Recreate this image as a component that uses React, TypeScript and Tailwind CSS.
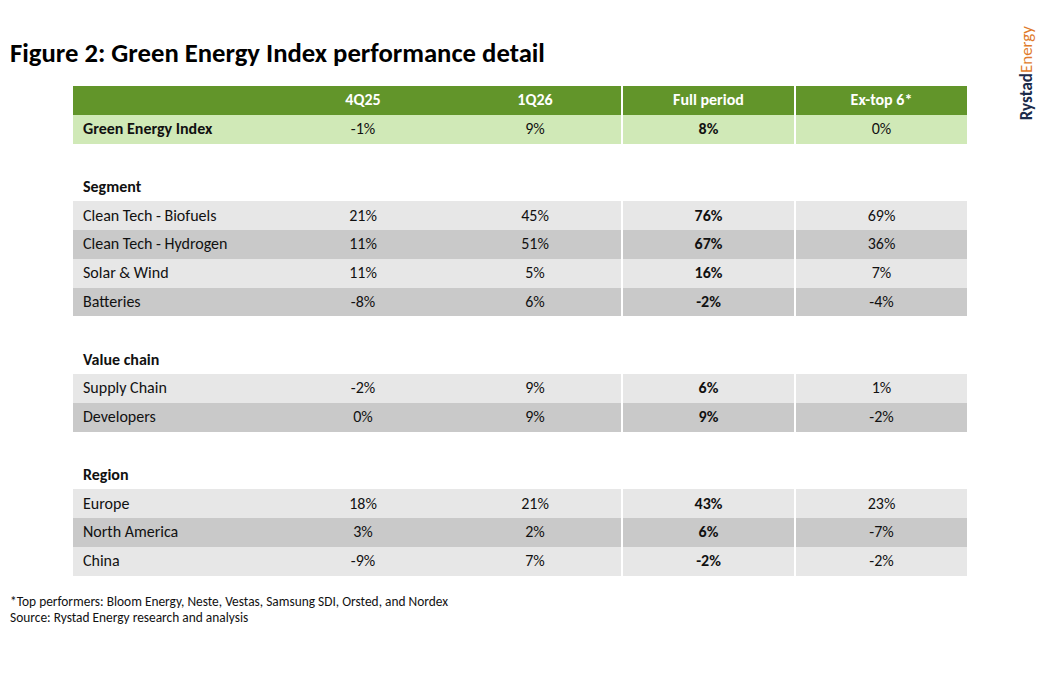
import React from "react";

type Row = { label: string; v: [string, string, string, string] };

const segment: Row[] = [
  { label: "Clean Tech - Biofuels", v: ["21%", "45%", "76%", "69%"] },
  { label: "Clean Tech - Hydrogen", v: ["11%", "51%", "67%", "36%"] },
  { label: "Solar & Wind", v: ["11%", "5%", "16%", "7%"] },
  { label: "Batteries", v: ["-8%", "6%", "-2%", "-4%"] },
];
const valueChain: Row[] = [
  { label: "Supply Chain", v: ["-2%", "9%", "6%", "1%"] },
  { label: "Developers", v: ["0%", "9%", "9%", "-2%"] },
];
const region: Row[] = [
  { label: "Europe", v: ["18%", "21%", "43%", "23%"] },
  { label: "North America", v: ["3%", "2%", "6%", "-7%"] },
  { label: "China", v: ["-9%", "7%", "-2%", "-2%"] },
];

const font = { fontFamily: "Carlito, Lato, 'Open Sans', sans-serif" };

function DataRow({ r, i }: { r: Row; i: number }) {
  const bg = i % 2 === 0 ? "bg-[#e7e7e7]" : "bg-[#c9c9c9]";
  return (
    <div className={`grid grid-cols-[204px_172px_172px_173px_173px] h-[28.8px] items-center text-[16px] text-[#111] ${bg}`}>
      <div className="pl-[10px]">{r.label}</div>
      <div className="text-center">{r.v[0]}</div>
      <div className="text-center">{r.v[1]}</div>
      <div className="text-center font-bold h-full flex items-center justify-center border-l-2 border-white">{r.v[2]}</div>
      <div className="text-center h-full flex items-center justify-center border-l-2 border-white">{r.v[3]}</div>
    </div>
  );
}

function Section({ title, rows }: { title: string; rows: Row[] }) {
  return (
    <>
      <div className="h-[28.8px]" />
      <div className="h-[28.8px] flex items-center pl-[10px] text-[16px] font-bold text-[#111]">{title}</div>
      {rows.map((r, i) => (
        <DataRow key={r.label} r={r} i={i} />
      ))}
    </>
  );
}

export default function App() {
  return (
    <div className="w-[1040px] h-[677px] bg-white overflow-hidden flex" style={font}>
      <div className="flex-1">
        <h1 className="pl-[10px] pt-[37px] text-[26.7px] leading-[32px] font-bold text-black whitespace-nowrap">
          Figure 2: Green Energy Index performance detail
        </h1>

        <div className="ml-[73px] mt-[17px] w-[894px]">
          <div className="grid grid-cols-[204px_172px_172px_173px_173px] h-[28.8px] items-center bg-[#62952a] text-white font-bold text-[16px]">
            <div />
            <div className="text-center">4Q25</div>
            <div className="text-center">1Q26</div>
            <div className="h-full flex items-center justify-center border-l-2 border-white">Full period</div>
            <div className="h-full flex items-center justify-center border-l-2 border-white">Ex-top 6*</div>
          </div>
          <div className="grid grid-cols-[204px_172px_172px_173px_173px] h-[28.8px] items-center bg-[#d0e9b7] text-[16px] text-[#111]">
            <div className="pl-[10px] font-bold">Green Energy Index</div>
            <div className="text-center">-1%</div>
            <div className="text-center">9%</div>
            <div className="h-full flex items-center justify-center border-l-2 border-white font-bold">8%</div>
            <div className="h-full flex items-center justify-center border-l-2 border-white">0%</div>
          </div>
          <Section title="Segment" rows={segment} />
          <Section title="Value chain" rows={valueChain} />
          <Section title="Region" rows={region} />
        </div>

        <div className="pl-[10px] pt-[18px] text-[13.4px] leading-[16px] text-[#111]">
          <div>*Top performers: Bloom Energy, Neste, Vestas, Samsung SDI, Orsted, and Nordex</div>
          <div>Source: Rystad Energy research and analysis</div>
        </div>
      </div>

      <div className="w-[21px] pt-[26px] flex items-start justify-start">
        <div
          className="text-[17px] leading-[15px] whitespace-nowrap"
          style={{ writingMode: "vertical-rl", transform: "rotate(180deg)" }}
        >
          <span className="font-bold text-[#1c2b4a]">Rystad</span>
          <span className="text-[#e07a2a]">Energy</span>
        </div>
      </div>
    </div>
  );
}
